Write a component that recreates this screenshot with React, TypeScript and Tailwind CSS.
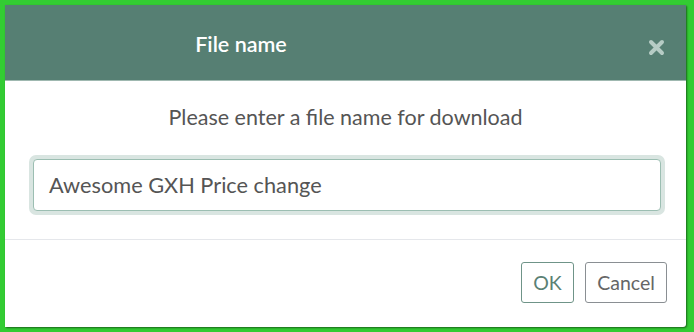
import React from "react";

export default function App() {
  return (
    <div className="w-[694px] h-[332px] bg-[#33cc33] pl-[5px] pt-[5px] pr-[8px] pb-[5px]" style={{ fontFamily: "Lato, 'Open Sans', sans-serif" }}>
      <div className="w-full h-full bg-white flex flex-col shadow-[1px_1px_2px_rgba(0,0,0,0.5)] rounded-br-[3px] overflow-hidden">
        <div className="h-[76px] shrink-0 bg-[#567f73] border-b border-[#9fb8b0] flex items-center relative">
          <div className="w-[472px] pt-[4px] text-center text-white text-[21.5px] font-semibold">File name</div>
          <svg className="absolute left-[643px] top-[34px]" width="17" height="17" viewBox="0 0 17 17">
            <path d="M3 3 L14 14 M14 3 L3 14" stroke="#b6ccc5" strokeWidth="4" strokeLinecap="round" />
          </svg>
        </div>
        <div className="pt-[23px] text-center text-[21.5px] text-[#555] leading-[26px]">Please enter a file name for download</div>
        <div className="pl-[24px] pr-[21px] pt-[25px]">
          <div className="rounded-[7px] bg-[#d9e5e1] p-[4px]">
            <div className="h-[52px] rounded-[4px] border border-[#9cbeb2] bg-white flex items-center px-[15px] pt-[1px] text-[21.75px] text-[#555]">
              Awesome GXH Price change
            </div>
          </div>
        </div>
        <div className="mt-[24px] border-t border-[#e5e7eb]" />
        <div className="flex justify-end gap-[11px] pr-[19px] pt-[22px]">
          <button className="w-[53px] h-[41px] rounded-[3px] border border-[#6f9488] text-[#5a8174] text-[19.5px]">OK</button>
          <button className="w-[82px] h-[41px] rounded-[3px] border border-[#8a8f93] text-[#666] text-[19.5px]">Cancel</button>
        </div>
      </div>
    </div>
  );
}
